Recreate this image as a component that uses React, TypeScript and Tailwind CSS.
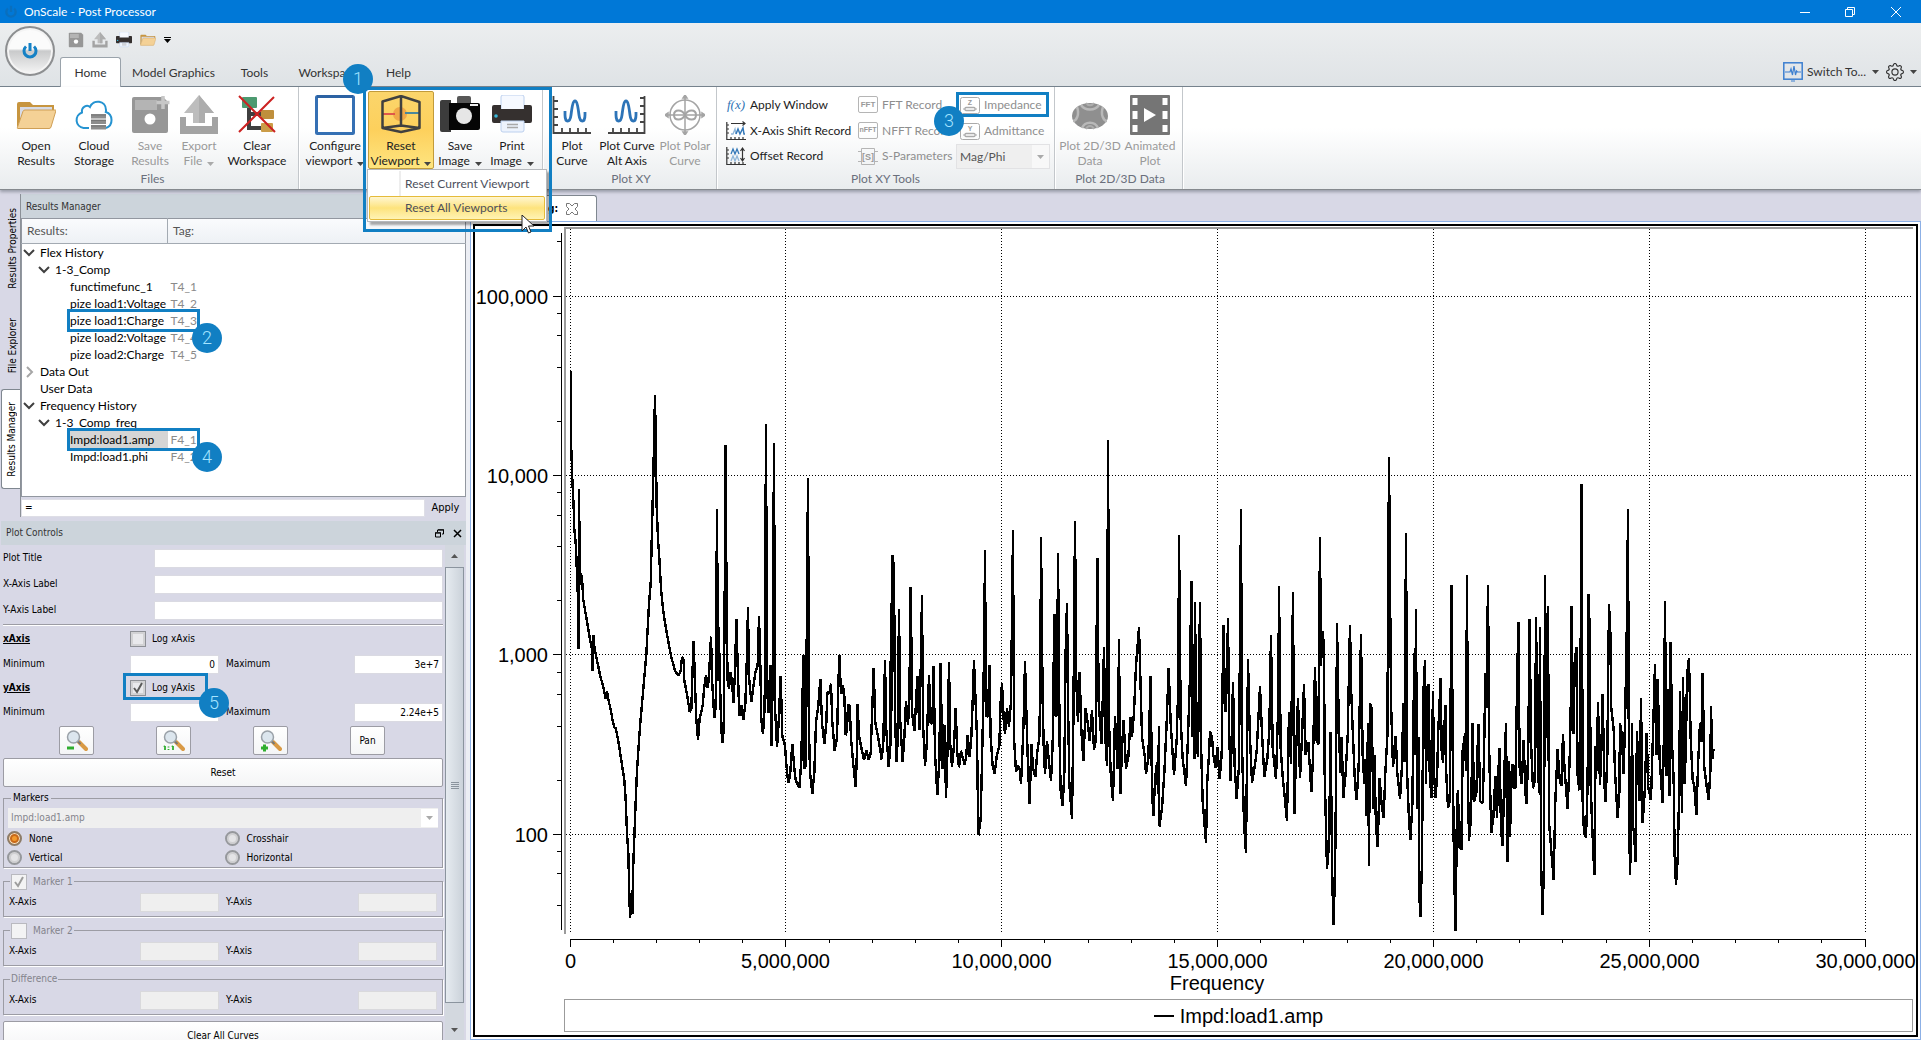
import React from 'react'
import type { ReactNode } from 'react'
import { BsGear } from 'react-icons/bs'

const TAHOMA = "font-['DejaVu_Sans_Condensed','DejaVu_Sans',sans-serif] text-[10px] leading-[14px]"

/* ---------- small shared parts ---------- */

const Badge = ({ n, className }: { n: number; className: string }) => (
  <span
    className={`absolute z-10 flex size-[30px] items-center justify-center rounded-full bg-[#117fc3] font-['Roboto',sans-serif] text-[18px] leading-none font-light text-[#a5e4ff] ${className}`}
  >
    {n}
  </span>
)

const Frame = ({ className }: { className: string }) => (
  <span className={`pointer-events-none absolute border-[3px] border-[#117fc3] ${className}`} />
)

const Caret = ({ className = 'text-[#444]' }: { className?: string }) => (
  <svg width="7" height="4" viewBox="0 0 7 4" className={`shrink-0 ${className}`} aria-hidden="true">
    <path d="M0 0h7L3.5 4z" fill="currentColor" />
  </svg>
)

/* ---------- icons ---------- */

const FolderIcon = ({ size = 40 }: { size?: number }) => (
  <svg width={size} height={size} viewBox="0 0 40 40">
    <path d="M1 9q0-2 2-2h11l3 3h21v6H8L1 33z" fill="#c7953f" />
    <path d="M4 12h32v6H10L4 31z" fill="#d7dbe6" />
    <path d="M9 15h30.500q.6 0 .4.800L35 32q-.4 1.500-2 1.500H2q-1 0-.6-1L7 16.300Q7.500 15 9 15z" fill="#f4d196" stroke="#cf9f55" />
  </svg>
)

const CloudIcon = () => (
  <svg width="40" height="40" viewBox="0 0 40 40" fill="none">
    <path
      d="M15 33H9.500a8 8 0 0 1-1.500-15.500C7 12 13 9 16 12c3-8 16-7 16 3 0 .8 0 1.500-.2 2A8.500 8.500 0 0 1 32 33"
      stroke="#2593d1"
      strokeWidth="2"
    />
    <path d="M17 19h15v4.500H17zM17 24.500h15V29H17zM17 30h15v4.500H17z" fill="#8d8d8d" />
    <path d="M17 20h15M17 25.500h15M17 31h15" stroke="#777" />
  </svg>
)

const DiskIcon = ({ size = 40, plus = true }: { size?: number; plus?: boolean }) => (
  <svg width={size} height={size} viewBox="0 0 40 40">
    <path d="M2 4q0-2 2-2h29l5 5v29q0 2-2 2H4q-2 0-2-2z" fill="#979797" />
    <path d="M5 5h22v10H5z" fill="#b4b4b4" />
    <circle cx="20" cy="24" r="5.500" fill="#fff" />
    {plus && <path d="M33 1v13M26.500 7.500h13" stroke="#c7c7c7" strokeWidth="3.500" />}
  </svg>
)

const ExportIcon = ({ size = 40 }: { size?: number }) => (
  <svg width={size} height={size} viewBox="0 0 40 40">
    <path d="M1 22h6v9h26v-9h6v17H1z" fill="#a3a3a3" />
    <path d="M20 0l15 18h-9v10H14V18H5z" fill="#bdbdbd" />
    <path d="M20 0l15 18h-9v10h-6z" fill="#adadad" />
  </svg>
)

const ClearIcon = () => (
  <svg width="40" height="40" viewBox="0 0 40 40" fill="none">
    <path d="M12 11v22h12M12 19h12" stroke="#3f3f3f" strokeWidth="4" />
    <rect x="5" y="2" width="15" height="11" rx="1" fill="#4c9a70" />
    <rect x="24" y="15" width="13" height="9" rx="1" fill="#bf8f3c" />
    <rect x="24" y="28" width="12" height="9" rx="1" fill="#cb9c47" />
    <path d="M2 1l36 36M37 2L2 37" stroke="#cc2222" strokeWidth="2" />
  </svg>
)

const ViewportIcon = () => (
  <svg width="40" height="40" viewBox="0 0 40 40">
    <rect x="1.500" y="1.500" width="37" height="37" rx="1" fill="#fff" stroke="#3570b4" strokeWidth="3" />
    <path d="M2 1.500h36" stroke="#2c62a3" strokeWidth="3" />
  </svg>
)

const ResetIcon = () => (
  <svg width="40" height="40" viewBox="0 0 40 40" fill="none">
    <circle cx="19" cy="19" r="7" fill="#f0a848" />
    <path d="M2 19h12" stroke="#e0574a" strokeWidth="2" />
    <path d="M24 18h14" stroke="#4a879c" strokeWidth="2" />
    <path d="M20 1.500v30M1.500 6.500L20 1l18.500 6v26L20 37 1.500 33zM1.500 33L20 30.500l18.500 2.500" stroke="#40403f" strokeWidth="2.500" strokeLinejoin="round" />
  </svg>
)

const CameraIcon = () => (
  <svg width="40" height="40" viewBox="0 0 40 40">
    <path d="M0 7q0-2 2-2h9v32H2q-2 0-2-2z" fill="#3c3c3c" />
    <path d="M17 3q0-2 2-2h10q2 0 2 2v5H17z" fill="#575757" />
    <path d="M9 8h29q2 0 2 2v23q0 2-2 2H9z" fill="#050505" />
    <path d="M30 10h8" stroke="#eee" strokeWidth="2" />
    <circle cx="24" cy="21" r="8" fill="#e6e6e6" />
  </svg>
)

const PrinterIcon = ({ size = 40 }: { size?: number }) => (
  <svg width={size} height={size} viewBox="0 0 40 40">
    <path d="M9 2q0-2 2-2h19q2 0 2 2v14H9z" fill="#f6f9ff" stroke="#bcd0ee" />
    <path d="M0 12q0-2 2-2h7v4h23v-4h6q2 0 2 2v14q0 2-2 2H2q-2 0-2-2z" fill="#35302f" />
    <circle cx="4" cy="21" r="1.800" fill="#39b6d8" />
    <path d="M9 26h23v9q0 2-2 2H11q-2 0-2-2z" fill="#edf3fd" stroke="#bcd0ee" />
    <path d="M15 29.500h11M15 32.500h11" stroke="#a9a9a9" strokeWidth="1.500" />
  </svg>
)

const CurveIcon = ({ flip = false }: { flip?: boolean }) => (
  <svg width="40" height="40" viewBox="0 0 40 40" fill="none">
    {flip ? (
      <path d="M37.500 1v37H1M37 3h-4M37 11h-4M37 19h-4M37 27h-4M6 37v-4M14 37v-4M22 37v-4M30 37v-4" stroke="#444" strokeWidth="1.800" />
    ) : (
      <path d="M1.500 1v37H39M2 6h4M2 14h4M2 22h4M2 30h4M10 37v-4M18 37v-4M26 37v-4M34 37v-4" stroke="#444" strokeWidth="1.800" />
    )}
    <path
      d={flip ? 'M9 16v4c0 8 5 8 6 0s2-14 4-14 3 6 4 14 6 8 6 0v-3' : 'M13 16v4c0 8 5 8 6 0s2-14 4-14 3 6 4 14 6 8 6 0v-3'}
      stroke="#2d74b8"
      strokeWidth="2.800"
    />
  </svg>
)

const PolarIcon = () => (
  <svg width="40" height="40" viewBox="0 0 40 40" fill="none" stroke="#a4a4a4" strokeWidth="1.500">
    <circle cx="20" cy="20" r="15" />
    <path d="M20 1v38M1 20h38" />
    <path d="M20 20c-3-6-11-6-11 0s8 6 11 0 11-6 11 0-8 6-11 0z" strokeWidth="2" />
    <path d="M20 0l2 3h-4zM20 40l2-3h-4zM0 20l3-2v4zM40 20l-3-2v4z" fill="#a4a4a4" />
  </svg>
)

const DataIcon = () => (
  <svg width="40" height="40" viewBox="0 0 40 40" fill="none">
    <ellipse cx="20" cy="21" rx="18" ry="13" fill="#8f8f8f" />
    <path d="M7 12c3 8-1 14-4 14M33 12c-3 8 1 14 4 14M12 33c3-7 13-7 16 0M11 10c4 6 14 6 18 0" stroke="#b9b9b9" strokeWidth="2.500" />
    <path d="M16 34c2-4 6-4 8 0M16 8c2 3 6 3 8 0" stroke="#adadad" strokeWidth="2" />
  </svg>
)

const FilmIcon = () => (
  <svg width="40" height="40" viewBox="0 0 40 40">
    <rect width="40" height="40" rx="1" fill="#757575" />
    <path d="M2.500 3h5v7h-5zM2.500 16h5v8h-5zM2.500 30h5v7h-5zM32.500 3h5v7h-5zM32.500 16h5v8h-5zM32.500 30h5v7h-5z" fill="#fff" />
    <path d="M14 13l12 7-12 7z" fill="#fff" />
  </svg>
)

const ShiftIcon = ({ vertical = false }: { vertical?: boolean }) => (
  <svg width="20" height="20" viewBox="0 0 20 20" fill="none">
    <path d="M.8 1v17.500H20M1 4h2M1 8h2M1 12h2M5 18v-2M9 18v-2M13 18v-2M17 18v-2" stroke="#333" strokeWidth="1.200" />
    {vertical ? (
      <>
        <path d="M5 8l2-5 2 5 2-5 2 5" stroke="#3478b8" strokeWidth="1.300" />
        <path d="M5 15l2-5 2 5 2-5 2 5" stroke="#8fb6d9" strokeWidth="1.300" />
        <path d="M16.500 3v11M14.500 5l2-3 2 3M14.500 12l2 3 2-3" stroke="#333" strokeWidth="1.200" />
      </>
    ) : (
      <>
        <path d="M5 2.500h14M16.500.500l2.500 2-2.500 2" stroke="#333" strokeWidth="1.200" />
        <path d="M5 13h2l2-5 1 5" stroke="#8fb6d9" strokeWidth="1.300" />
        <path d="M10 13l2-5 2 5 3-6 1 6h1" stroke="#3478b8" strokeWidth="1.500" />
      </>
    )}
  </svg>
)

const LetterIcon = ({ text, size }: { text: string; size: string }) => (
  <span
    className={`flex h-[17px] w-5 items-center justify-center rounded-[2px] border border-[#b5b5b5] font-['Liberation_Sans',sans-serif] font-bold text-[#9a9a9a] ${size}`}
  >
    {text}
  </span>
)

const SIcon = () => (
  <svg width="20" height="17" viewBox="0 0 20 17" fill="none" stroke="#b5b5b5">
    <path d="M3.500.500h13v16h-13zM0 3.500h3M0 13.500h3M17 3.500h3M17 13.500h3" />
    <text x="10" y="12" textAnchor="middle" fontSize="9" fontWeight="700" fontFamily="Liberation Sans, sans-serif" fill="#999" stroke="none">
      [S]
    </text>
  </svg>
)

const MeterIcon = ({ letter }: { letter: string }) => (
  <svg width="20" height="17" viewBox="0 0 20 17" fill="none" stroke="#aaa">
    <rect x=".5" y=".5" width="19" height="16" rx="2" />
    <rect x="5" y="10.500" width="10" height="3" rx="1" strokeWidth="1.300" />
    <path d="M3 12h2M15 12h2" />
    <text x="10" y="8" textAnchor="middle" fontSize="7" fontWeight="700" fontFamily="Liberation Sans, sans-serif" fill="#999" stroke="none">
      {letter}
    </text>
  </svg>
)

/* ---------- title bar and tabs ---------- */

const TitleBar = () => (
  <header className="flex h-[23px] shrink-0 items-center gap-[6px] bg-[#0078d7] pl-1 text-white">
    <svg width="14" height="14" viewBox="0 0 18 18" fill="none" stroke="#0a6fbd" strokeWidth="3">
      <path d="M5 4.500a6 6 0 1 0 8 0M9 1v8" />
    </svg>
    <h1 className="text-[12px] leading-4">OnScale - Post Processor</h1>
    <div className="ml-auto flex items-center">
      <button type="button" aria-label="Minimize" className="flex h-[23px] w-[46px] items-center justify-center">
        <svg width="10" height="10" stroke="currentColor">
          <path d="M0 5.500h10" />
        </svg>
      </button>
      <button type="button" aria-label="Restore" className="flex h-[23px] w-[43px] items-center justify-center">
        <svg width="10" height="10" fill="none" stroke="currentColor">
          <path d="M.5 2.500h7v7h-7zM2.500 2.500v-2h7v7h-2" />
        </svg>
      </button>
      <button type="button" aria-label="Close" className="flex h-[23px] w-[50px] items-center justify-center">
        <svg width="10" height="10" stroke="currentColor">
          <path d="M0 0l10 10M10 0L0 10" />
        </svg>
      </button>
    </div>
  </header>
)

const TABS = [
  { name: 'Model Graphics', width: 'w-[105px]' },
  { name: 'Tools', width: 'w-[57px]' },
  { name: 'Workspace', width: 'w-[90px]' },
  { name: 'Help', width: 'w-[51px]' },
]

const TabStrip = () => (
  <div className="flex h-16 shrink-0 border-b border-[#74818c] bg-linear-to-b from-[#eceeef] to-[#dfe3e6] text-[#333]">
    <div className="flex w-[60px] justify-center pt-[3px]">
      <button
        type="button"
        aria-label="Application menu"
        className="flex size-[50px] items-center justify-center rounded-full border-2 border-[#8d8f91] bg-linear-to-b from-[#fbfbfb] from-45% via-[#c9cacb] via-50% to-[#f6f6f6] shadow-[inset_0_0_0_2px_#f4f4f4]"
      >
        <svg width="18" height="18" viewBox="0 0 18 18" fill="none" stroke="#1581c5" strokeWidth="3">
          <path d="M5 4.500a6 6 0 1 0 8 0M9 1v8" />
        </svg>
      </button>
    </div>
    <div className="flex flex-1 flex-col justify-between">
      <div className="flex h-[33px] items-center gap-2 pl-2">
        <button type="button" aria-label="Save"><DiskIcon size={16} plus={false} /></button>
        <button type="button" aria-label="Export"><ExportIcon size={16} /></button>
        <button type="button" aria-label="Print"><PrinterIcon size={16} /></button>
        <button type="button" aria-label="Open"><FolderIcon size={16} /></button>
        <button type="button" aria-label="Customize quick access" className="flex flex-col gap-px">
          <span className="h-px w-[7px] bg-black" />
          <Caret className="text-black" />
        </button>
      </div>
      <nav className="-mb-px flex h-[30px] items-stretch text-[12px] leading-4">
        <button type="button" className="w-[61px] rounded-t-[3px] border border-b-0 border-[#9aa3ab] bg-white pt-px">Home</button>
        {TABS.map(tab => (
          <button key={tab.name} type="button" className={`pt-px ${tab.width}`}>{tab.name}</button>
        ))}
        <div className="ml-auto flex items-start gap-1 pt-[5px] pr-1">
          <button type="button" className="flex items-center gap-1">
            <svg width="20" height="20" viewBox="0 0 20 20" fill="none" stroke="#3c7fd0">
              <rect x=".8" y=".8" width="18.400" height="16.400" strokeWidth="1.500" />
              <path d="M2 10h5l1-3 1.500 6L11 4l1.500 9 1-4 1 1H18M8 19h4" strokeWidth="1.200" />
            </svg>
            Switch To...
            <span className="pl-[2px]"><Caret /></span>
          </button>
          <button type="button" aria-label="Settings" className="flex items-center gap-[6px] pt-px pl-[3px]">
            <BsGear size={18} />
            <Caret />
          </button>
        </div>
      </nav>
    </div>
  </div>
)

/* ---------- ribbon ---------- */

type BigButtonProps = {
  icon: ReactNode
  lines: [string, string]
  width: string
  caret?: boolean
  disabled?: boolean
  active?: boolean
}

const BigButton = ({ icon, lines, width, caret, disabled, active }: BigButtonProps) => (
  <button
    type="button"
    disabled={disabled}
    className={`flex h-[78px] shrink-0 flex-col items-center rounded-[2px] border pt-[3px] text-[12px] leading-[15px] whitespace-nowrap ${width} ${
      active ? 'border-[#c29b3a] bg-linear-to-b from-[#fbd56b] via-[#fdd05c] to-[#fee57f] text-[#222]' : 'border-transparent'
    } ${disabled ? 'text-[#9a9a9a]' : 'text-[#1c1c1c]'}`}
  >
    {icon}
    <span className="mt-[3px]">{lines[0]}</span>
    <span className="flex items-center gap-[5px]">
      {lines[1]}
      {caret && <span className="pt-[6px]"><Caret className={disabled ? 'text-[#aaa]' : 'text-[#444]'} /></span>}
    </span>
  </button>
)

const Group = ({ title, children, className = '' }: { title?: string; children: ReactNode; className?: string }) => (
  <section className={`relative flex flex-col border-r border-[#c3c7cb] pt-1 shadow-[1px_0_0_#fff] ${className}`}>
    <div className="flex">{children}</div>
    <p className="mt-[2px] text-center text-[12px] leading-[15px] text-[#6a6f7c]">{title}</p>
  </section>
)

const SmallButton = ({ icon, children, disabled }: { icon: ReactNode; children: ReactNode; disabled?: boolean }) => (
  <button
    type="button"
    disabled={disabled}
    className={`flex h-[26px] items-center gap-1 whitespace-nowrap ${disabled ? 'text-[#8e8e8e]' : 'text-[#1c1c1c]'}`}
  >
    <span className="flex w-5 justify-center">{icon}</span>
    {children}
  </button>
)

const ResetMenu = () => (
  <div className="absolute top-[82px] left-[68px] z-10 w-[180px] border border-[#b5b8bc] bg-white p-px text-[12px] text-[#4c4f5c] shadow-[3px_3px_2px_#0005]">
    <button type="button" className="flex h-[25px] w-full items-center bg-linear-to-r from-white from-[30px] via-[#dcdcdc] via-[31px] to-white to-[32px] pl-9">
      Reset Current Viewport
    </button>
    <button type="button" className="flex h-6 w-full items-center rounded-[2px] border border-[#e5bb3a] bg-linear-to-b from-[#fff6cf] via-[#fde37c] to-[#fff3b4] pl-[35px]">
      Reset All Viewports
    </button>
  </div>
)

const Ribbon = () => (
  <div className="relative z-20 flex h-[103px] shrink-0 border-b border-[#85898e] bg-linear-to-b from-white from-40% to-[#e9ecee] shadow-[0_2px_3px_#999ca8]">
    <Group title="Files" className="w-[299px] pl-[7px]">
      <BigButton icon={<FolderIcon />} lines={['Open', 'Results']} width="w-[58px]" />
      <BigButton icon={<CloudIcon />} lines={['Cloud', 'Storage']} width="w-[58px]" />
      <BigButton icon={<DiskIcon />} lines={['Save', 'Results']} width="w-[54px]" disabled />
      <BigButton icon={<ExportIcon />} lines={['Export', 'File']} width="w-[44px]" caret disabled />
      <BigButton icon={<ClearIcon />} lines={['Clear', 'Workspace']} width="w-[72px]" />
    </Group>
    <Group className="w-[244px] pl-[3px]">
      <BigButton icon={<ViewportIcon />} lines={['Configure', 'viewport']} width="w-[66px]" caret />
      <BigButton icon={<ResetIcon />} lines={['Reset', 'Viewport']} width="w-[66px]" caret active />
      <BigButton icon={<CameraIcon />} lines={['Save', 'Image']} width="w-[52px]" caret />
      <BigButton icon={<PrinterIcon />} lines={['Print', 'Image']} width="w-[52px]" caret />
      <ResetMenu />
      <Frame className="top-0 left-[64px] z-10 h-[145px] w-[189px]" />
      <Badge n={1} className="-top-[23px] left-[44px]" />
      <svg width="14" height="20" viewBox="0 0 14 20" className="absolute top-[128px] left-[222px] z-20">
        <path d="M1 0v16l4-4 2.500 6 2.500-1-2.500-6H13z" fill="#fff" stroke="#222" />
      </svg>
    </Group>
    <Group title="Plot XY" className="w-[174px] pl-[3px]">
      <BigButton icon={<CurveIcon />} lines={['Plot', 'Curve']} width="w-[52px]" />
      <BigButton icon={<CurveIcon flip />} lines={['Plot Curve', 'Alt Axis']} width="w-[58px]" />
      <BigButton icon={<PolarIcon />} lines={['Plot Polar', 'Curve']} width="w-[58px]" disabled />
    </Group>
    <Group title="Plot XY Tools" className="w-[338px]">
      <div className="flex h-[78px] w-[141px] flex-col pt-px pl-[9px] text-[12px]">
        <SmallButton icon={<span className="font-['Liberation_Serif',serif] text-[13px] text-[#2f74b5] italic">f(x)</span>}>Apply Window</SmallButton>
        <SmallButton icon={<ShiftIcon />}>X-Axis Shift Record</SmallButton>
        <SmallButton icon={<ShiftIcon vertical />}>Offset Record</SmallButton>
      </div>
      <div className="flex h-[78px] w-[98px] flex-col pt-px text-[12px]">
        <SmallButton disabled icon={<LetterIcon text="FFT" size="text-[8px]" />}>FFT Record</SmallButton>
        <SmallButton disabled icon={<LetterIcon text="nFFT" size="text-[7px]" />}>NFFT Record</SmallButton>
        <SmallButton disabled icon={<SIcon />}>S-Parameters</SmallButton>
      </div>
      <div className="relative flex h-[78px] w-[94px] flex-col pt-px text-[12px]">
        <div className="pl-1"><SmallButton disabled icon={<MeterIcon letter="Z" />}>Impedance</SmallButton></div>
        <div className="pl-1"><SmallButton disabled icon={<MeterIcon letter="Y" />}>Admittance</SmallButton></div>
        <div className="flex h-[26px] items-center border border-[#e2e2e4] bg-[#efefef]">
          <select aria-label="Format" disabled className="flex-1 appearance-none pl-[3px] text-[12px] text-[#555] opacity-100">
            <option>Mag/Phi</option>
          </select>
          <span className="flex h-full w-[17px] items-center justify-center bg-[#f8f8f8]"><Caret className="text-[#aaa]" /></span>
        </div>
        <Frame className="top-px left-0 h-[25px] w-[93px]" />
        <Badge n={3} className="top-[15px] -left-[22px]" />
      </div>
    </Group>
    <Group title="Plot 2D/3D Data" className="w-[128px] pl-[3px]">
      <BigButton icon={<DataIcon />} lines={['Plot 2D/3D', 'Data']} width="w-[64px]" disabled />
      <BigButton icon={<FilmIcon />} lines={['Animated', 'Plot']} width="w-[56px]" disabled />
    </Group>
  </div>
)

/* ---------- results manager ---------- */

type Row = { label: string; level: number; tag?: string; open?: boolean; selected?: boolean; mark?: number }

const ROWS: Row[] = [
  { label: 'Flex History', level: 0, open: true },
  { label: '1-3_Comp', level: 1, open: true },
  { label: 'functimefunc_1', level: 2, tag: 'T4_1' },
  { label: 'pize load1:Voltage', level: 2, tag: 'T4_2' },
  { label: 'pize load1:Charge', level: 2, tag: 'T4_3', mark: 2 },
  { label: 'pize load2:Voltage', level: 2, tag: 'T4_4' },
  { label: 'pize load2:Charge', level: 2, tag: 'T4_5' },
  { label: 'Data Out', level: 0, open: false },
  { label: 'User Data', level: 0 },
  { label: 'Frequency History', level: 0, open: true },
  { label: '1-3_Comp_freq', level: 1, open: true },
  { label: 'Impd:load1.amp', level: 2, tag: 'F4_1', selected: true, mark: 4 },
  { label: 'Impd:load1.phi', level: 2, tag: 'F4_2' },
]

const INDENT = ['pl-0', 'pl-[15px]', 'pl-[30px]']

const Chevron = ({ open }: { open: boolean }) => (
  <svg width="12" height="12" viewBox="0 0 12 12" fill="none" strokeWidth="2" stroke={open ? '#404040' : '#a6a6a6'}>
    <path d={open ? 'M1 3l5 5 5-5' : 'M4 1l5 5-5 5'} />
  </svg>
)

const ResultsManager = () => (
  <section className="flex h-[323px] shrink-0">
    <div className={`flex w-[19px] shrink-0 flex-col ${TAHOMA} text-black`}>
      <button type="button" className="flex h-[109px] items-center justify-center pl-1">
        <span className="rotate-180 whitespace-nowrap [writing-mode:vertical-rl]">Results Properties</span>
      </button>
      <button type="button" className="flex h-[86px] items-center justify-center pl-1">
        <span className="rotate-180 whitespace-nowrap [writing-mode:vertical-rl]">File Explorer</span>
      </button>
      <button type="button" className="flex h-[100px] items-center justify-center rounded-l-[3px] border border-r-0 border-[#7f8790] bg-white pl-[2px]">
        <span className="rotate-180 whitespace-nowrap [writing-mode:vertical-rl]">Results Manager</span>
      </button>
    </div>
    <div className="flex min-w-0 flex-1 flex-col border-l border-[#8b9097]">
      <h2 className={`h-[24px] bg-[#ccd4db] pt-[6px] pl-[5px] ${TAHOMA} text-[#333]`}>Results Manager</h2>
      <table className="w-full table-fixed border-collapse border border-[#9297a0] bg-white text-[12px] leading-4 text-black">
        <thead>
          <tr className="h-[25px] border-b border-[#a3aab2] bg-linear-to-b from-[#fafbfd] to-[#eef1f5] text-left text-[#555]">
            <th className="w-[146px] border-r border-[#a3aab2] pl-[5px] font-normal">Results:</th>
            <th className="pl-[5px] font-normal">Tag:</th>
          </tr>
        </thead>
        <tbody>
          {ROWS.map(row => (
            <tr key={row.label + row.tag} className="h-[17px]">
              <td className={`p-0 ${INDENT[row.level]}`}>
                <div className={`relative flex h-[17px] items-center whitespace-nowrap ${row.level === 2 ? 'ml-4 pl-[2px]' : ''} ${row.selected ? 'bg-[#d5d5d5]' : ''}`}>
                  {row.level < 2 && (
                    <span className="w-[18px] pl-px">{row.open !== undefined && <Chevron open={row.open} />}</span>
                  )}
                  {row.label}
                  {row.mark && <Frame className="-top-[3px] -left-[1px] z-10 h-[23px] w-[133px]" />}
                  {row.mark && <Badge n={row.mark} className="top-[11px] left-[124px]" />}
                </div>
              </td>
              <td className="py-0 pl-[3px] text-[#8a8a8a]">{row.tag}</td>
            </tr>
          ))}
          <tr className="h-[31px]"><td /><td /></tr>
        </tbody>
      </table>
      <div className={`flex flex-1 pt-[2px] ${TAHOMA}`}>
        <input aria-label="Expression" defaultValue="=" className="h-[18px] min-w-0 flex-1 border border-[#dedee6] bg-white px-[3px]" />
        <button type="button" className="w-[41px] text-[11px]">Apply</button>
      </div>
    </div>
  </section>
)

/* ---------- plot controls ---------- */

const Tick = ({ className }: { className: string }) => (
  <svg width="12" height="12" viewBox="0 0 12 12" fill="none" strokeWidth="2" className={`pointer-events-none absolute top-[2px] left-[2px] ${className}`}>
    <path d="M2 6l3 4 5-9" stroke="currentColor" />
  </svg>
)

const Check = ({ label, checked, disabled }: { label: string; checked?: boolean; disabled?: boolean }) => (
  <label className={`flex items-center gap-[6px] ${disabled ? 'text-[#84848c]' : 'text-black'}`}>
    <span className="relative flex">
      <input
        type="checkbox"
        defaultChecked={checked}
        disabled={disabled}
        className="size-4 appearance-none border border-[#8e9096] bg-[#e9e9ec] shadow-[inset_0_0_0_2px_#d2d2d4] disabled:border-[#b9b9bf] disabled:bg-[#f3f3f4] disabled:shadow-none"
      />
      {checked && <Tick className={disabled ? 'text-[#9d9d9d]' : 'text-[#5a5a5a]'} />}
    </span>
    {label}
  </label>
)

const Radio = ({ label, checked }: { label: string; checked?: boolean }) => (
  <label className="flex h-[19px] items-center gap-[7px]">
    <input
      type="radio"
      name="marker"
      defaultChecked={checked}
      className="size-[15px] appearance-none rounded-full border-2 border-[#96989c] bg-[#e4e4e6] shadow-[inset_0_0_0_2px_#d0d0d2] checked:border-[#8d7c68] checked:bg-[#f39a2c] checked:shadow-[inset_0_0_0_1px_#f7e2c4,inset_0_0_0_3px_#c8691a]"
    />
    {label}
  </label>
)

const FIELD = 'h-[19px] border border-[#dadae2] bg-white px-[3px] text-right text-black'

const MinMax = ({ axis, min, max }: { axis: string; min: string; max: string }) => (
  <div className="flex h-6 items-center">
    <label htmlFor={`${axis}-min`} className="w-[127px]">Minimum</label>
    <input id={`${axis}-min`} defaultValue={min} className={`w-[89px] ${FIELD}`} />
    <label htmlFor={`${axis}-max`} className="ml-[7px] flex-1">Maximum</label>
    <input id={`${axis}-max`} defaultValue={max} className={`w-[89px] ${FIELD}`} />
  </div>
)

const MarkerBox = ({ legend, id, className }: { legend: ReactNode; id: string; className: string }) => (
  <fieldset className={`h-[43px] border border-[#9c9ca4] shadow-[1px_1px_0_#fff] ${className}`}>
    <legend className="ml-[6px] h-[14px] px-px text-[#84848c]">{legend}</legend>
    <div className="mt-[3px] flex h-[22px] items-center pr-[5px] pl-[5px]">
      <label htmlFor={`${id}-x`} className="w-[131px]">X-Axis</label>
      <input id={`${id}-x`} disabled className="h-[19px] w-[79px] border border-[#d9d9dc] bg-[#efefef]" />
      <label htmlFor={`${id}-y`} className="ml-[7px] flex-1">Y-Axis</label>
      <input id={`${id}-y`} disabled className="h-[19px] w-[79px] border border-[#d9d9dc] bg-[#efefef]" />
    </div>
  </fieldset>
)

const Magnifier = ({ children }: { children: ReactNode }) => (
  <svg width="22" height="22" viewBox="0 0 22 22" fill="none">
    <path d="M13 12l7 7" stroke="#d99a45" strokeWidth="4" strokeLinecap="round" />
    <path d="M11.500 11l3 3" stroke="#777" strokeWidth="2" />
    <circle cx="7.500" cy="7" r="6" fill="#dce6ee" stroke="#9aa1a8" strokeWidth="1.500" />
    {children}
  </svg>
)

const ZOOMS = [
  { label: 'Zoom out', mark: <path d="M1 18h7" stroke="#2fae2f" strokeWidth="3" /> },
  { label: 'Actual size', mark: <path d="M2 16v4M1 17l1-1M10 16v4M9 17l1-1M5.500 16.500v1M5.500 19v1" stroke="#2fae2f" strokeWidth="1.800" /> },
  { label: 'Zoom in', mark: <path d="M1 18h7M4.500 14.500v7" stroke="#2fae2f" strokeWidth="3" /> },
]

const SMALL_BTN = 'flex h-[29px] w-[35px] items-center justify-center rounded-[2px] border border-[#9c9ca4] bg-linear-to-b from-white to-[#f4f5f6]'

const PlotControls = () => (
  <section className={`flex min-h-0 flex-1 flex-col ${TAHOMA} text-black`}>
    <div className="flex h-[24px] shrink-0 items-center bg-[#ccd4db] pr-1 pl-[5px] text-[#333]">
      <h2 className="flex-1">Plot Controls</h2>
      <button type="button" aria-label="Float" className="mr-[9px]">
        <svg width="9" height="9" fill="none" stroke="#000">
          <path d="M2.500 3V1h6v4H7M.5 4h5v4h-5zM3 .800h6M0 3.800h6" />
        </svg>
      </button>
      <button type="button" aria-label="Close panel">
        <svg width="9" height="9" stroke="#000" strokeWidth="1.500">
          <path d="M1 1l7 7M8 1L1 8" />
        </svg>
      </button>
    </div>
    <div className="flex min-h-0 flex-1 overflow-hidden">
      <div className="flex h-[510px] min-w-0 flex-1 flex-col pr-[2px] pl-[2px]">
        {['Plot Title', 'X-Axis Label', 'Y-Axis Label'].map(name => (
          <div key={name} className="flex h-[26px] shrink-0 items-center">
            <label htmlFor={name} className="w-[151px]">{name}</label>
            <input id={name} className="h-[19px] min-w-0 flex-1 border border-[#dadae2] bg-white px-[3px]" />
          </div>
        ))}
        <div className="mt-[1px] h-[2px] shrink-0 border-t border-[#9c9ca4] bg-white" />
        <div className="flex h-[26px] shrink-0 items-center">
          <b className="w-[127px] underline">xAxis</b>
          <Check label="Log xAxis" />
        </div>
        <MinMax axis="x" min="0" max="3e+7" />
        <div className="relative flex h-6 shrink-0 items-center">
          <b className="w-[127px] underline">yAxis</b>
          <Check label="Log yAxis" checked />
          <Frame className="-top-[3px] left-[120px] h-[27px] w-[85px]" />
          <Badge n={5} className="top-[12px] left-[196px]" />
        </div>
        <MinMax axis="y" min="" max="2.24e+5" />
        <div className="mt-[2px] flex shrink-0 gap-[62px] pl-[56px]">
          {ZOOMS.map(z => (
            <button key={z.label} type="button" aria-label={z.label} className={SMALL_BTN}>
              <Magnifier>{z.mark}</Magnifier>
            </button>
          ))}
          <button type="button" className={SMALL_BTN}>Pan</button>
        </div>
        <button type="button" className="mt-[3px] h-[29px] shrink-0 rounded-[2px] border border-[#9c9ca4] bg-linear-to-b from-white to-[#f4f5f6]">Reset</button>

        <fieldset className="mt-[4px] h-[77px] shrink-0 border border-[#9c9ca4] shadow-[1px_1px_0_#fff]">
          <legend className="ml-[7px] px-[2px]">Markers</legend>
          <div className="mx-1 mt-[3px] flex h-5 items-center bg-[#efefef]">
            <select aria-label="Marker curve" disabled className="flex-1 appearance-none pl-[3px] text-[#84848c] opacity-100">
              <option>Impd:load1.amp</option>
            </select>
            <span className="flex h-[18px] w-[17px] items-center justify-center bg-white"><Caret className="text-[#aaa]" /></span>
          </div>
          <div className="grid grid-cols-2 pt-px pl-[3px]">
            <Radio label="None" checked />
            <Radio label="Crosshair" />
            <Radio label="Vertical" />
            <Radio label="Horizontal" />
          </div>
        </fieldset>
        <MarkerBox id="m1" className="mt-[6px] shrink-0" legend={<Check label="Marker 1" checked disabled />} />
        <MarkerBox id="m2" className="mt-[6px] shrink-0" legend={<Check label="Marker 2" disabled />} />
        <MarkerBox id="diff" className="mt-[6px] shrink-0" legend="Difference" />
        <button type="button" className="mt-[6px] h-[29px] shrink-0 rounded-[2px] border border-[#9c9ca4] bg-linear-to-b from-white to-[#f4f5f6]">Clear All Curves</button>
      </div>
      <div className="mr-[2px] flex w-[19px] shrink-0 flex-col bg-[#d3d8df]">
        <span className="flex h-[22px] items-center justify-center"><Caret className="rotate-180 text-[#555]" /></span>
        <span className="flex h-[436px] flex-col items-center justify-center gap-px border border-[#8b949e] bg-linear-to-r from-[#e6ebf0] to-[#cbd2da]">
          <span className="h-px w-2 bg-[#8b949e]" />
          <span className="h-px w-2 bg-[#8b949e]" />
          <span className="h-px w-2 bg-[#8b949e]" />
          <span className="h-px w-2 bg-[#8b949e]" />
        </span>
        <span className="flex flex-1 items-center justify-center pt-4"><Caret className="text-[#555]" /></span>
      </div>
    </div>
  </section>
)

/* ---------- chart ---------- */

// the curve comes in three sections, each with its own origin and vertical scale
const SECTIONS = [
  {
    transform: 'translate(560 340) scale(.33333 .38265)',
    points:
      '33,82 33,262 37,365 41,437 43,495 48,540 50,590 53,645 55,808 57,390 58,480 61,640 63,610 66,622 70,680 80,730 90,782 97,812 98,866 101,772 103,800 107,820 120,875 130,908 137,938 141,918 145,940 152,965 158,995 163,1012 167,1014 175,1048 185,1105 193,1150 197,1200 201,1290 205,1340 207,1415 210,1510 215,1465 217,1500 219,1390 223,1300 226,1228 231,1125 240,1010 250,912 259,820 267,690 272,638 276,492 280,355 285,145 288,310 290,435 294,520 298,570 303,650 310,710 320,765 333,825 345,865 356,877 362,865 366,828 371,835 373,890 382,930 389,972 394,965 397,880 401,788 405,900 409,990 414,1044 419,990 428,955 433,905 438,875 443,910 447,880 453,775 457,900 463,988 467,960 471,442 474,890 476,750 480,890 483,1000 487,1054 491,1020 495,560 497,274 500,750 503,890 507,912 511,868 516,890 520,948 525,870 529,730 533,850 538,982 544,955 550,994 556,950 560,850 564,698 567,880 574,946 581,900 586,870 593,850 597,722 601,850 604,990 609,1030 614,960 618,220 621,900 625,974 629,890 632,850 635,1060 638,880 642,269 645,960 651,1064 656,1000 662,878 667,1035 675,1060 679,1110 685,1158 690,1140 697,1056 703,1120 707,1150 718,1170 724,1100 730,823 733,1120 738,1110 740,800 744,361 747,1020 750,1130 757,1185 763,1130 768,1000 775,955 781,886 786,1000 793,1056 799,1000 802,920 808,925 813,898 817,1000 824,1073 831,1040 834,930 838,823 842,905 845,925 849,903 853,930 857,1033 861,1020 864,953 869,955 873,1040 880,1110 887,1168 890,1100 893,952 897,1035 904,1065 912,1098 919,1073 926,1096 932,1080 937,960 941,856 946,1000 955,1040 965,1096 970,1050 975,836 979,1020 986,1117 991,1060 993,688 995,970 998,562 1002,600 1005,970 1009,1102 1013,1050 1017,703 1021,1000 1028,1102 1033,1040 1038,944 1044,1007 1048,940 1052,646 1057,980 1063,1021 1068,950 1072,878 1078,1020 1083,830 1086,667 1089,1000 1095,1112 1100,1060 1107,876 1112,1000 1117,1003 1121,853 1125,1080 1132,1188 1138,1100 1142,845 1147,1120 1154,1005 1158,1198 1163,1060 1167,842 1171,1060 1176,1115 1182,1060 1187,963 1192,1080 1197,1117',
  },
  {
    transform: 'translate(930 380) scale(.33333 .35714)',
    points:
      '87,1085 93,1038 104,1078 109,1050 113,995 119,1054 124,1000 128,900 132,785 137,905 141,1000 145,1275 152,1230 155,1110 160,900 163,690 165,476 168,940 174,943 178,798 182,1000 188,1080 194,1102 200,1055 208,1025 212,900 216,848 221,950 225,992 231,918 237,970 243,900 249,420 252,1000 258,1098 264,1080 269,1090 273,1130 277,1050 281,950 285,787 290,960 294,1080 299,1188 304,1020 310,1090 316,1112 322,1040 328,1000 331,850 333,440 338,900 341,1020 345,1103 351,1010 356,1060 363,1122 368,1020 373,655 377,940 381,940 384,484 389,1020 392,1150 398,1193 403,1100 407,760 411,624 414,900 418,1130 426,1228 430,960 435,395 439,850 444,958 449,818 454,980 460,1066 467,920 473,960 479,1010 486,925 492,1035 497,1010 502,498 506,900 515,1020 522,748 526,1000 531,1080 534,168 538,1000 543,1120 549,1178 555,942 563,1090 567,725 571,1160 576,1030 581,952 588,1088 595,1055 602,945 606,1000 612,930 618,800 627,692 631,830 636,1000 644,1050 648,1102 655,1060 662,829 666,1150 670,1220 676,1110 681,1070 684,1160 687,970 688,1250 696,1200 703,1100 710,960 716,806 722,960 732,1105 740,1010 745,850 747,434 752,950 758,1060 768,1136 774,1000 780,830 784,562 788,1000 790,740 793,1060 795,622 799,1000 804,1056 810,622 814,1050 818,1180 828,1295 832,1120 837,1050 840,984 846,1000 850,1050 857,1085 862,1028 869,1117 875,1050 880,686 886,930 890,860 894,666 898,1000 902,1124 909,846 914,1080 920,1172 927,1080 933,361 936,1020 942,1240 948,1325 954,781 959,980 966,1127 973,1090 980,1040 985,950 990,857 996,990 1003,1110 1012,1060 1018,980 1023,714 1028,1030 1038,1118 1045,900 1047,577 1052,1030 1058,1110 1071,1234 1077,930 1083,1075 1089,594 1093,1214 1098,1050 1104,890 1110,1115 1116,1000 1122,851 1127,1050 1135,1015 1144,1153 1149,1060 1155,804 1160,1010 1165,1020 1170,440 1173,800 1177,703 1182,740 1184,1100 1188,1250 1191,1370 1197,1300 1202,986 1206,1350 1210,1527 1215,1395 1218,1140 1221,680 1226,950 1231,1100 1235,1000 1240,1170 1247,1100 1253,1000 1260,686 1264,880 1269,1000 1275,1130 1280,1175 1286,1080 1293,711 1298,1050 1303,1130 1306,1060 1310,1220 1314,960 1317,1360 1320,905 1325,920 1330,1200 1333,1050 1338,1250 1343,1307 1349,1115 1355,1190 1361,1227 1366,1100 1372,1000 1377,216 1383,900 1389,1084 1397,997 1402,1100 1410,1173 1416,1080 1420,905 1424,1070 1428,428 1432,1120 1437,1230 1441,1288 1447,1190 1453,765 1455,1050 1458,641 1461,1200 1467,1000 1468,1440 1471,1503 1476,1350 1480,880 1485,785',
  },
  {
    transform: 'translate(1400 380) scale(.33333 .42092)',
    points:
      '75,666 78,960 82,730 86,722 89,930 94,992 99,738 102,930 106,992 111,950 115,830 122,709 125,880 129,910 136,772 139,940 144,1016 149,1000 151,830 155,486 158,870 162,1160 167,1308 171,1000 174,975 178,1110 184,1116 188,880 195,840 198,930 201,464 204,960 207,1095 213,1040 218,815 222,1003 229,980 235,817 241,1002 248,1005 252,900 256,697 259,780 264,488 268,900 274,1076 280,1040 286,942 291,1040 295,930 299,875 303,1070 308,1107 313,930 318,816 322,1144 326,905 330,1086 335,930 338,912 341,970 346,970 351,735 355,576 359,920 365,960 371,855 376,980 380,1008 385,860 389,568 393,860 399,970 405,950 408,562 413,870 417,980 420,588 423,1150 428,1272 432,1140 435,464 439,850 444,538 447,1050 452,1100 461,1187 466,1000 473,878 478,945 484,965 489,840 494,930 503,1018 509,900 512,800 514,538 518,820 521,840 524,670 529,635 533,940 538,975 543,540 545,248 548,1000 552,1075 558,1087 563,960 565,508 569,585 572,960 576,1050 583,1175 587,870 590,930 594,765 600,963 604,880 608,745 613,960 617,1002 622,890 627,532 631,600 634,780 641,830 645,930 653,1041 658,980 660,815 665,840 671,935 676,780 681,560 684,306 687,1000 690,1176 693,1090 696,815 699,1060 703,1080 706,1144 711,835 716,960 719,1000 723,755 728,1053 734,980 740,838 745,970 753,997 759,840 765,675 770,890 773,711 779,900 784,960 788,1005 792,830 795,524 799,940 804,735 808,988 812,623 817,880 821,950 824,1130 828,1200 833,1140 838,960 840,738 846,1029 849,706 854,960 858,860 861,700 867,660 872,850 878,950 883,965 889,1034 895,900 900,815 904,860 908,697 913,920 920,965 926,997 931,930 933,775 937,900 941,876',
  },
]

const X_LABELS = ['0', '5,000,000', '10,000,000', '15,000,000', '20,000,000', '25,000,000', '30,000,000']
const Y_LABELS = ['100,000', '10,000', '1,000', '100']

const xAt = (millions: number) => Math.floor(570 + (millions * 1295) / 30) + 0.5
const yAt = (value: number) => Math.floor(296 + (5 - Math.log10(value)) * 179.4) + 0.5

const MINOR_Y = [1e5, 1e4, 1e3, 1e2, 1e1]
  .flatMap(decade => [2, 4, 6, 8].map(k => k * decade))
  .filter(v => v < 2.3e5 && v > 30)

const Chart = () => (
  <svg viewBox="475 226 1441 769" className="min-h-0 w-full flex-1" role="img" aria-label="Impd:load1.amp against frequency">
    <path d="M565 934V228H1913" fill="none" stroke="#9b9b9b" strokeWidth="2" />
    <g stroke="#000" strokeDasharray="1 2">
      {X_LABELS.map((label, i) => (
        <path key={label} d={`M${xAt(i * 5)} 229V932`} />
      ))}
      {Y_LABELS.map((label, i) => (
        <path key={label} d={`M566 ${yAt(10 ** (5 - i))}H1912`} />
      ))}
    </g>
    <g stroke="#000">
      <path d="M561.500 233V930M570 939.500H1866" />
      {Y_LABELS.map((label, i) => (
        <path key={label} d={`M553 ${yAt(10 ** (5 - i))}h8`} />
      ))}
      {MINOR_Y.map(v => (
        <path key={v} d={`M557 ${yAt(v)}h4`} />
      ))}
      {Array.from({ length: 31 }, (_, m) => (
        <path key={m} d={`M${xAt(m)} 939v${m % 5 === 0 ? 8 : 4}`} />
      ))}
    </g>
    <g fill="none" stroke="#000" strokeWidth="2.400" strokeLinejoin="bevel" shapeRendering="crispEdges">
      {SECTIONS.map(s => (
        <polyline key={s.transform} transform={s.transform} points={s.points} vectorEffect="non-scaling-stroke" />
      ))}
    </g>
    <g fontFamily="Liberation Sans, Arial, sans-serif" fontSize="20" fill="#000">
      {Y_LABELS.map((label, i) => (
        <text key={label} x="548" y={yAt(10 ** (5 - i)) + 7} textAnchor="end">{label}</text>
      ))}
      {X_LABELS.map((label, i) => (
        <text key={label} x={xAt(i * 5)} y="968" textAnchor="middle">{label}</text>
      ))}
      <text x="1217" y="990" textAnchor="middle">Frequency</text>
    </g>
  </svg>
)

const PlotArea = () => (
  <main className="flex min-w-0 flex-1 flex-col">
    <div className="flex h-[27px] shrink-0 items-end">
      <div className={`flex h-[26px] w-[127px] items-center justify-end gap-2 rounded-t-[3px] border border-b-0 border-[#7f8790] bg-white pr-[18px] ${TAHOMA} font-bold text-black`}>
        g:
        <button type="button" aria-label="Close tab">
          <svg width="12" height="12" viewBox="0 0 12 12" fill="none" stroke="#777">
            <path d="M.5.500h3L6 3 8.500.500h3v3L9 6l2.500 2.500v3h-3L6 9l-2.500 2.500h-3v-3L3 6 .500 3.500z" />
          </svg>
        </button>
      </div>
    </div>
    <div className="flex min-h-0 flex-1 flex-col border border-[#8cb0e6] bg-white p-[2px]">
      <div className="flex min-h-0 flex-1 flex-col border-2 border-black">
        <Chart />
        <div className="mt-1 mr-[3px] mb-[3px] ml-[89px] flex h-[33px] shrink-0 items-center justify-center gap-[6px] border border-[#9b9b9b] font-['Liberation_Sans',Arial,sans-serif] text-[20px] text-black">
          <span className="h-[2px] w-5 bg-black" />
          Impd:load1.amp
        </div>
      </div>
    </div>
  </main>
)

const App = () => (
  <div className="flex h-screen flex-col overflow-hidden bg-[#d8d8e6] font-['Lato','Noto_Sans',sans-serif]">
    <TitleBar />
    <TabStrip />
    <Ribbon />
    <div className="flex min-h-0 flex-1 pt-1">
      <aside className="flex w-[466px] shrink-0 flex-col gap-1 pl-px">
        <ResultsManager />
        <PlotControls />
      </aside>
      <div className="w-1 shrink-0 bg-[#eceef4]" />
      <PlotArea />
    </div>
  </div>
)

export default React.memo(App)
